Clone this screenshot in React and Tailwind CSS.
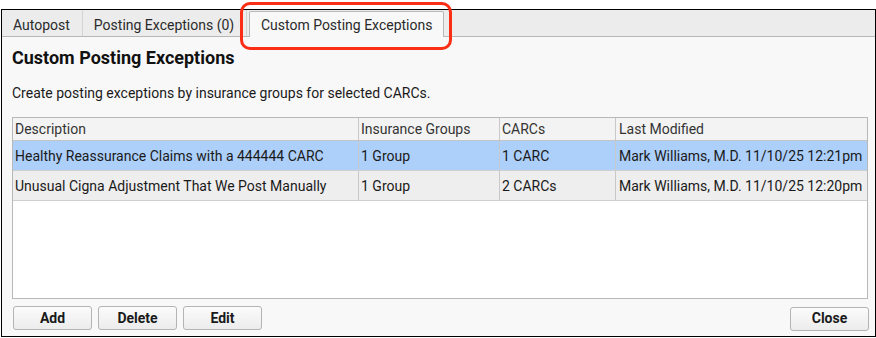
import React from 'react';

const ROWS = [
    { desc: 'Healthy Reassurance Claims with a 444444 CARC', groups: '1 Group', carcs: '1 CARC', modified: 'Mark Williams, M.D. 11/10/25 12:21pm', selected: true },
    { desc: 'Unusual Cigna Adjustment That We Post Manually', groups: '1 Group', carcs: '2 CARCs', modified: 'Mark Williams, M.D. 11/10/25 12:20pm', selected: false },
];

function Btn({ children }) {
    return (
        <button className="h-[24px] w-[79px] rounded-[3px] border border-[#b4b4b4] bg-gradient-to-b from-[#fbfbfb] to-[#ececec] text-[14px] font-bold text-[#1a1a1a]">
            {children}
        </button>
    );
}

export default function App() {
    return (
        <div className="h-[338px] w-[876px] bg-white pt-[9px] pl-[1px] font-['Roboto',sans-serif] text-[#1a1a1a]">
            <div className="relative flex h-[328px] w-[875px] flex-col border border-black bg-[#f8f8f8]">
                {/* tab strip */}
                <div className="flex h-[27px] items-end border-b border-[#b8b8b8] bg-[#ececec]">
                    <div className="flex h-[26px] items-center border-r border-[#d4d4d4] pl-[11px] pr-[12px] pt-[5px] text-[14px] text-[#2a2a2a]">Autopost</div>
                    <div className="flex h-[26px] items-center border-r border-[#d4d4d4] pl-[11px] pr-[12px] pt-[5px] text-[14px] text-[#2a2a2a]">Posting Exceptions (0)</div>
                    <div className="relative -mb-px ml-[2px] flex h-[26px] w-[195px] items-center justify-center rounded-t-[2px] border border-b-0 border-[#b8b8b8] bg-[#f8f8f8] pt-[1px] text-[14px] text-[#2a2a2a]">
                        Custom Posting Exceptions
                    </div>
                </div>

                {/* red highlight around active tab */}
                <div className="absolute left-[238px] top-[-8px] h-[48px] w-[212px] rounded-[10px] border-[3px] border-[#fb2d14]"></div>

                <div className="flex flex-1 flex-col pl-[10px] pr-[7px]">
                    <h1 className="mt-[10px] text-[18px] font-bold leading-[22px] text-[#111]">Custom Posting Exceptions</h1>
                    <p className="mt-[15px] text-[14px] leading-[18px]">Create posting exceptions by insurance groups for selected CARCs.</p>

                    {/* table */}
                    <div className="mt-[15px] h-[182px] border border-[#b8b8b8] bg-white text-[14px]">
                        <div className="grid h-[23px] grid-cols-[346px_141px_116px_1fr] border-b border-[#c4c4c4] bg-[#f3f3f3] text-[#333]">
                            <div className="flex items-center border-r border-[#c8c8c8] pl-[2px]">Description</div>
                            <div className="flex items-center border-r border-[#c8c8c8] pl-[2px]">Insurance Groups</div>
                            <div className="flex items-center border-r border-[#c8c8c8] pl-[2px]">CARCs</div>
                            <div className="flex items-center pl-[3px]">Last Modified</div>
                        </div>
                        {ROWS.map((r) => (
                            <div
                                key={r.desc}
                                className={`grid h-[30px] grid-cols-[346px_141px_116px_1fr] border-b border-[#cfcfcf] ${r.selected ? 'bg-[#add0fb]' : 'bg-[#eeeeee]'}`}
                            >
                                <div className="flex items-center border-r border-[#c8c8c8] pl-[2px] pt-[2px]">{r.desc}</div>
                                <div className="flex items-center border-r border-[#c8c8c8] pl-[2px] pt-[2px]">{r.groups}</div>
                                <div className="flex items-center border-r border-[#c8c8c8] pl-[2px] pt-[2px]">{r.carcs}</div>
                                <div className="flex items-center pl-[3px] pt-[2px]">{r.modified}</div>
                            </div>
                        ))}
                    </div>

                    {/* buttons */}
                    <div className="mt-[7px] flex items-center">
                        <div className="ml-[1px] flex gap-[6px]">
                            <Btn>Add</Btn>
                            <Btn>Delete</Btn>
                            <Btn>Edit</Btn>
                        </div>
                        <div className="ml-auto mr-[-1px]">
                            <Btn>Close</Btn>
                        </div>
                    </div>
                </div>
            </div>
        </div>
    );
}
